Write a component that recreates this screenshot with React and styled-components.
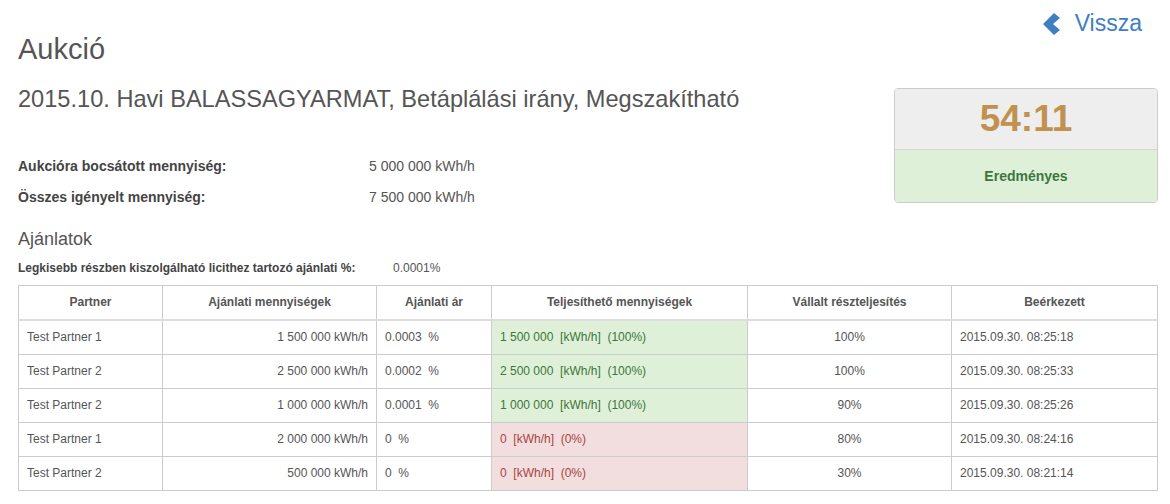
import React from 'react';
import styled, { createGlobalStyle } from 'styled-components';

const GlobalStyle = createGlobalStyle`
  body {
    margin: 0;
    background: #fff;
    font-family: "Liberation Sans", Arial, sans-serif;
    color: #555;
  }
`;

const offers = [
  { partner: 'Test Partner 1', qty: '1 500 000 kWh/h', price: '0.0003  %', ok: true, done: '1 500 000  [kWh/h]  (100%)', part: '100%', at: '2015.09.30. 08:25:18' },
  { partner: 'Test Partner 2', qty: '2 500 000 kWh/h', price: '0.0002  %', ok: true, done: '2 500 000  [kWh/h]  (100%)', part: '100%', at: '2015.09.30. 08:25:33' },
  { partner: 'Test Partner 2', qty: '1 000 000 kWh/h', price: '0.0001  %', ok: true, done: '1 000 000  [kWh/h]  (100%)', part: '90%', at: '2015.09.30. 08:25:26' },
  { partner: 'Test Partner 1', qty: '2 000 000 kWh/h', price: '0  %', ok: false, done: '0  [kWh/h]  (0%)', part: '80%', at: '2015.09.30. 08:24:16' },
  { partner: 'Test Partner 2', qty: '500 000 kWh/h', price: '0  %', ok: false, done: '0  [kWh/h]  (0%)', part: '30%', at: '2015.09.30. 08:21:14' },
];

const App = () => (
  <Page>
    <GlobalStyle />
    <TopBar>
      <Title>Aukció</Title>
      <BackLink href="#">
        <svg width="18" height="22" viewBox="0 0 18 22">
          <path d="M11 0 L17 5 L10 11 L17 17 L11 22 L0 11 Z" fill="#3d7fc1" />
        </svg>
        Vissza
      </BackLink>
    </TopBar>
    <Main>
      <Info>
        <Subtitle>2015.10. Havi BALASSAGYARMAT, Betáplálási irány, Megszakítható</Subtitle>
        <Facts>
          <FactRow>
            <FactLabel>Aukcióra bocsátott mennyiség:</FactLabel>
            <FactValue>5 000 000 kWh/h</FactValue>
          </FactRow>
          <FactRow>
            <FactLabel>Összes igényelt mennyiség:</FactLabel>
            <FactValue>7 500 000 kWh/h</FactValue>
          </FactRow>
        </Facts>
      </Info>
      <Timer>
        <Clock>54:11</Clock>
        <Status>Eredményes</Status>
      </Timer>
    </Main>
    <Section>Ajánlatok</Section>
    <MinRow>
      <MinLabel>Legkisebb részben kiszolgálható licithez tartozó ajánlati %:</MinLabel>
      <MinValue>0.0001%</MinValue>
    </MinRow>
    <Table>
      <colgroup>
        <col style={{ width: 144 }} />
        <col style={{ width: 214 }} />
        <col style={{ width: 115 }} />
        <col style={{ width: 256 }} />
        <col style={{ width: 204 }} />
        <col />
      </colgroup>
      <thead>
        <tr>
          <Th>Partner</Th>
          <Th>Ajánlati mennyiségek</Th>
          <Th>Ajánlati ár</Th>
          <Th>Teljesíthető mennyiségek</Th>
          <Th>Vállalt részteljesítés</Th>
          <Th>Beérkezett</Th>
        </tr>
      </thead>
      <tbody>
        {offers.map((o, i) => (
          <tr key={i}>
            <Td>{o.partner}</Td>
            <Td $align="right">{o.qty}</Td>
            <Td>{o.price}</Td>
            <Td $state={o.ok ? 'success' : 'danger'}>{o.done}</Td>
            <Td $align="center">{o.part}</Td>
            <Td>{o.at}</Td>
          </tr>
        ))}
      </tbody>
    </Table>
  </Page>
);

const Page = styled.div`
  padding: 0 12px 0 18px;
`;

const TopBar = styled.div`
  display: flex;
  justify-content: space-between;
  align-items: flex-start;
`;

const Title = styled.h2`
  margin: 32px 0 0;
  font-size: 29px;
  font-weight: 400;
  line-height: 34px;
  color: #555;
`;

const BackLink = styled.a`
  display: flex;
  align-items: center;
  gap: 14px;
  margin: 9px 16px 0 0;
  font-size: 23px;
  line-height: 28px;
  color: #3d7fc1;
  text-decoration: none;

  svg {
    margin-top: 1px;
  }
`;

const Main = styled.div`
  display: flex;
  justify-content: space-between;
  align-items: flex-start;
`;

const Info = styled.div`
  display: flex;
  flex-direction: column;
`;

const Subtitle = styled.h3`
  margin: 19px 0 0;
  font-size: 23.6px;
  font-weight: 400;
  line-height: 28px;
  color: #555;
`;

const Facts = styled.div`
  margin-top: 43px;
  display: flex;
  flex-direction: column;
  gap: 11px;
`;

const FactRow = styled.div`
  display: flex;
  font-size: 14px;
  line-height: 20px;
`;

const FactLabel = styled.span`
  width: 351px;
  font-weight: 700;
  color: #444;
`;

const FactValue = styled.span`
  color: #555;
`;

const Timer = styled.div`
  width: 262px;
  margin-top: 22px;
  border: 1px solid #ccc;
  border-radius: 4px;
  overflow: hidden;
`;

const Clock = styled.div`
  height: 60px;
  background: #eee;
  display: flex;
  align-items: center;
  justify-content: center;
  font-size: 37px;
  font-weight: 700;
  color: #c0914f;
  border-bottom: 1px solid #d6d6d6;
`;

const Status = styled.div`
  height: 52px;
  background: #dff0d8;
  display: flex;
  align-items: center;
  justify-content: center;
  font-size: 14px;
  font-weight: 700;
  color: #3c763d;
`;

const Section = styled.h4`
  margin: 21px 0 0;
  font-size: 18px;
  font-weight: 400;
  line-height: 22px;
  color: #555;
`;

const MinRow = styled.div`
  display: flex;
  margin-top: 10px;
  font-size: 12px;
  line-height: 16px;
`;

const MinLabel = styled.span`
  width: 375px;
  font-weight: 700;
  color: #444;
`;

const MinValue = styled.span`
  color: #555;
`;

const Table = styled.table`
  margin-top: 9px;
  width: 1140px;
  table-layout: fixed;
  border-collapse: collapse;
  font-size: 12px;
  line-height: 17px;
  border: 1px solid #ccc;
`;

const Th = styled.th`
  padding: 8px;
  text-align: center;
  font-weight: 700;
  color: #555;
  border: 1px solid #ccc;
  border-bottom: 2px solid #ddd;
`;

const tones = {
  success: { bg: '#dff0d8', fg: '#3c763d' },
  danger: { bg: '#f2dede', fg: '#a94442' },
};

const Td = styled.td`
  padding: 8px;
  text-align: ${({ $align }) => $align || 'left'};
  color: ${({ $state }) => ($state ? tones[$state].fg : '#555')};
  background: ${({ $state }) => ($state ? tones[$state].bg : 'transparent')};
  border: 1px solid #ccc;
  white-space: pre;
`;

export default App;
